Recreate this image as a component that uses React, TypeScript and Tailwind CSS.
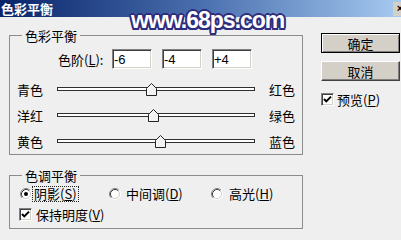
import React from "react";

function Sunken({ className = "", children }: { className?: string; children?: React.ReactNode }) {
  return (
    <div
      className={
        "border border-t-[#808080] border-l-[#808080] border-b-white border-r-white bg-white shadow-[inset_1px_1px_0_#404040,inset_-1px_-1px_0_#d4d0c8] " +
        className
      }
    >
      {children}
    </div>
  );
}

function NumInput({ value, className = "" }: { value: string; className?: string }) {
  return (
    <Sunken className={"flex h-[20px] w-[40px] items-center pl-[1px] font-['Liberation_Sans',sans-serif] text-[13px] " + className}>
      {value}
    </Sunken>
  );
}

function Check() {
  return (
    <Sunken className="h-[13px] w-[13px] shrink-0">
      <svg width="11" height="11" viewBox="0 0 11 11" className="block">
        <polyline points="2,5 4.3,7.4 9,2.6" fill="none" stroke="#000" strokeWidth="2" />
      </svg>
    </Sunken>
  );
}

function Radio({ on = false }: { on?: boolean }) {
  return (
    <svg width="12" height="12" viewBox="0 0 12 12" className="block shrink-0">
      <circle cx="6" cy="6" r="4.5" fill="#fff" />
      <path d="M2.11 9.89 A5.5 5.5 0 0 1 9.89 2.11" fill="none" stroke="#808080" />
      <path d="M9.89 2.11 A5.5 5.5 0 0 1 2.11 9.89" fill="none" stroke="#ffffff" />
      <path d="M2.82 9.18 A4.5 4.5 0 0 1 9.18 2.82" fill="none" stroke="#404040" />
      <path d="M9.18 2.82 A4.5 4.5 0 0 1 2.82 9.18" fill="none" stroke="#d4d0c8" />
      {on && <circle cx="6" cy="6" r="2" fill="#000" />}
    </svg>
  );
}

function Track({ value }: { value: number }) {
  const center = 1 + 0.99 * (value + 100);
  return (
    <div className="relative h-[4px] w-[198px] border border-[#303030] bg-white">
      <svg
        width="11"
        height="13"
        viewBox="0 0 11 13"
        className="absolute top-[-5px] block"
        style={{ left: Math.round(center - 5.5) - 1 }}
      >
        <polygon points="5.5,0.5 10.5,5.5 10.5,12.5 0.5,12.5 0.5,5.5" fill="#f2f2f2" stroke="#222" />
        <polyline points="1.5,12 1.5,5.9 5.5,1.9" fill="none" stroke="#ffffff" />
      </svg>
    </div>
  );
}

function SliderRow({ left, right, value, first = false }: { left: string; right: string; value: number; first?: boolean }) {
  return (
    <div className={"flex h-[26px] items-center " + (first ? "mt-[7px]" : "")}>
      <span className="ml-[7px] w-[40px]">{left}</span>
      <Track value={value} />
      <span className="ml-[14px]">{right}</span>
    </div>
  );
}

function Button({ label, isDefault = false, className = "" }: { label: string; isDefault?: boolean; className?: string }) {
  return (
    <div
      className={
        "flex h-[20px] w-[79px] items-center justify-center bg-[#d4d0c8] " +
        (isDefault
          ? "border border-black shadow-[inset_1px_1px_0_#ffffff,inset_-1px_-1px_0_#808080] "
          : "border border-t-white border-l-white border-r-[#404040] border-b-[#404040] shadow-[inset_-1px_-1px_0_#808080] ") +
        className
      }
    >
      {label}
    </div>
  );
}

export default function App() {
  return (
    <div className="relative h-[240px] w-[401px] overflow-hidden bg-[#efefef] font-['Noto_Sans_CJK_SC',sans-serif] text-[13px] leading-none text-black">
      <div className="flex h-[17px] items-center bg-linear-to-r from-[#0a246a] via-[#4a6fae] to-[#a6caf0]">
        <span className="pl-[1px] text-[13px] font-bold tracking-[0px] text-white">色彩平衡</span>
        <div className="ml-auto mr-[-6px] flex h-[14px] w-[14px] items-center justify-center bg-[#d4d0c8] font-['Liberation_Sans',sans-serif] text-[11px] font-bold">
          ×
        </div>
      </div>

      <div className="flex">
        <div className="ml-[9px] flex w-[294px] flex-col">
          <fieldset className="mt-[11px] border border-[#8c8c8c]">
            <legend className="ml-[12px] h-[15px] px-[3px] leading-[15px]">色彩平衡</legend>
            <div className="flex flex-col">
              <div className="mt-[6px] flex h-[20px] items-center">
                <span className="ml-[48px] w-[54px]">
                  色阶(<span className="underline underline-offset-[1px]">L</span>):
                </span>
                <NumInput value="-6" />
                <NumInput value="-4" className="ml-[10px]" />
                <NumInput value="+4" className="ml-[10px]" />
              </div>
              <SliderRow left="青色" right="红色" value={-6} first />
              <SliderRow left="洋红" right="绿色" value={-4} />
              <SliderRow left="黄色" right="蓝色" value={4} />
            </div>
          </fieldset>

          <fieldset className="mt-[13px] border border-[#8c8c8c]">
            <legend className="ml-[12px] h-[15px] px-[3px] leading-[15px]">色调平衡</legend>
            <div className="flex flex-col">
              <div className="mt-[1px] flex h-[19px] items-center pl-[10px]">
                <div className="flex w-[89px] items-center">
                  <Radio on />
                  <span className="ml-[1px] flex h-[14px] items-center px-[1px] outline outline-1 outline-dotted outline-[#222]">
                    阴影(<span className="underline underline-offset-[1px]">S</span>)
                  </span>
                </div>
                <div className="flex w-[102px] items-center">
                  <Radio />
                  <span className="ml-[5px]">
                    中间调(<span className="underline underline-offset-[1px]">D</span>)
                  </span>
                </div>
                <div className="flex items-center">
                  <Radio />
                  <span className="ml-[6px]">
                    高光(<span className="underline underline-offset-[1px]">H</span>)
                  </span>
                </div>
              </div>
              <div className="mb-[4px] mt-[1px] flex h-[20px] items-center pl-[9px]">
                <Check />
                <span className="ml-[4px]">
                  保持明度(<span className="underline underline-offset-[1px]">V</span>)
                </span>
              </div>
            </div>
          </fieldset>
        </div>

        <div className="ml-[18px] mt-[16px] flex w-[79px] flex-col">
          <Button label="确定" isDefault />
          <Button label="取消" className="mt-[8px]" />
          <div className="mt-[12px] flex items-center">
            <Check />
            <span className="ml-[3px]">
              预览(<span className="underline underline-offset-[1px]">P</span>)
            </span>
          </div>
        </div>
      </div>

      <div className="absolute left-[131px] top-[8px] font-['Liberation_Sans',sans-serif] text-[23px] font-bold leading-[24px] tracking-[-1px] text-white [text-shadow:2px_0_0_#2e2c7c,-2px_0_0_#2e2c7c,0_2px_0_#2e2c7c,0_-2px_0_#2e2c7c,1.5px_1.5px_0_#2e2c7c,-1.5px_1.5px_0_#2e2c7c,1.5px_-1.5px_0_#2e2c7c,-1.5px_-1.5px_0_#2e2c7c]">
        www.68ps.com
      </div>
    </div>
  );
}
